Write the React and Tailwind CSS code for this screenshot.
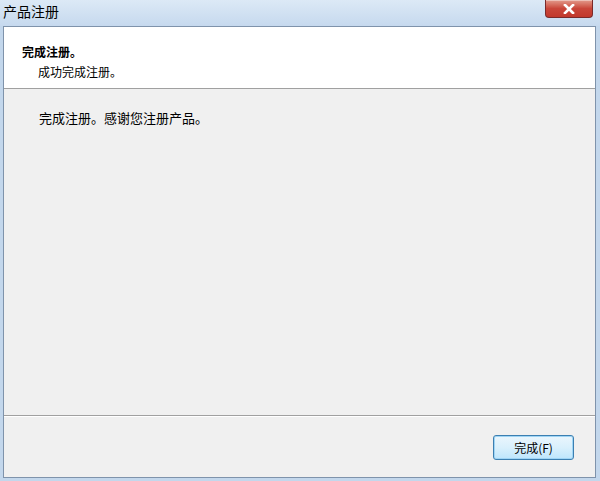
const cjk = { fontFamily: '"Segoe UI", "Noto Sans CJK SC", "Noto Sans", sans-serif' };

const CloseButton = () => (
    <div className="mr-[7px] flex h-[18px] w-[48px] items-center justify-center rounded-b-[4px] border border-t-0 border-[#7a2a2a] bg-gradient-to-b from-[#e29a8c] via-[#c9463a] to-[#c2382c] shadow-[inset_0_1px_0_rgba(255,255,255,0.4)]">
        <svg width="12" height="10" viewBox="0 0 12 10">
            <path d="M2 1 L10 9 M10 1 L2 9" stroke="#ffffff" strokeWidth="2.6" strokeLinecap="square" />
        </svg>
    </div>
);

const App = () => {
    return (
        <div className="flex h-[481px] w-[600px] flex-col bg-[#c3d7ec]" style={cjk}>
            {/* title bar */}
            <div className="flex h-[26px] shrink-0 items-start justify-between bg-gradient-to-b from-[#dce9f6] to-[#c6d9ee]">
                <div className="pl-[3px] pt-[2px] text-[14px] leading-[18px] text-black">产品注册</div>
                <CloseButton />
            </div>

            <div className="flex flex-1 min-h-0 px-[3px] pb-[3px] pr-[4px]">
                <div className="flex flex-1 flex-col border border-[#7f93ab] bg-[#f0f0f0]">
                    {/* header */}
                    <div className="h-[62px] shrink-0 border-b border-[#a0a0a0] bg-white pl-[18px] pt-[17px]">
                        <div className="text-[12px] font-bold leading-[16px] text-black">完成注册。</div>
                        <div className="mt-[4px] pl-[16px] text-[12px] leading-[16px] text-black">成功完成注册。</div>
                    </div>

                    {/* body */}
                    <div className="flex-1 pl-[35px] pt-[20px]">
                        <div className="text-[13px] leading-[17px] text-black">完成注册。感谢您注册产品。</div>
                    </div>

                    {/* footer */}
                    <div className="flex h-[62px] shrink-0 items-start justify-end border-t border-[#a0a0a0] pr-[21px] pt-[19px] shadow-[inset_0_1px_0_#ffffff]">
                        <button className="flex h-[25px] w-[81px] items-center justify-center rounded-[3px] border border-[#3c7fb1] bg-gradient-to-b from-[#eaf6fd] via-[#d9f0fc] to-[#bee6fd] text-[12px] text-black shadow-[inset_0_0_0_1px_#9fd5f5]">
                            完成(F)
                        </button>
                    </div>
                </div>
            </div>
        </div>
    );
};

export default App;
